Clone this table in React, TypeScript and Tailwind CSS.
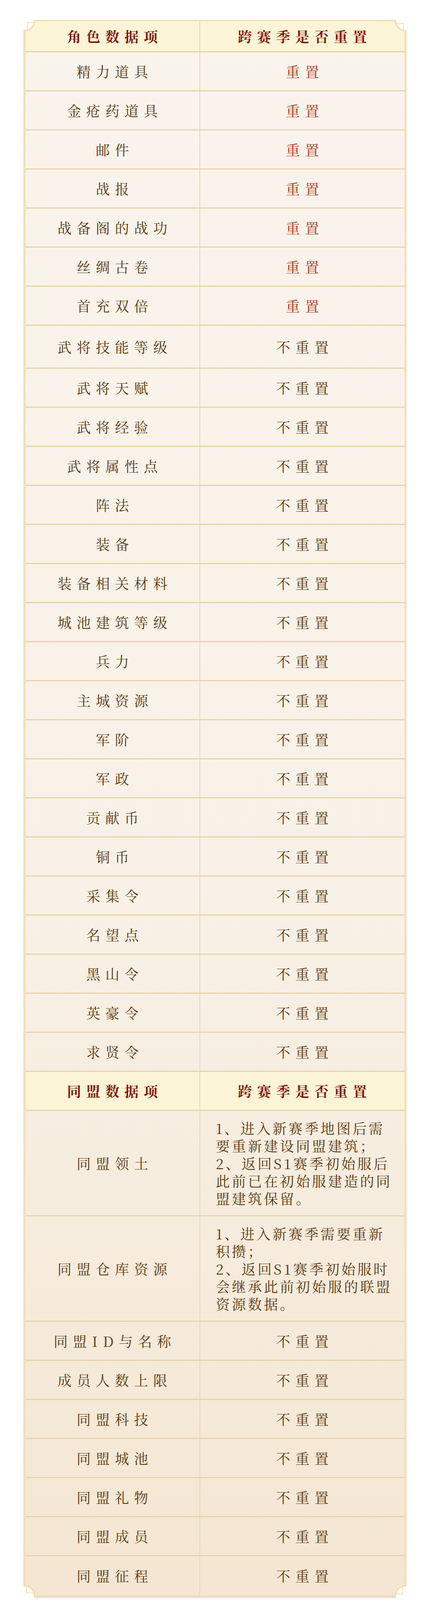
import React from "react";

type RowData = { left: string; right: string; red?: boolean; tall?: boolean };

const roleRows: RowData[] = [
  { left: "精力道具", right: "重置", red: true },
  { left: "金疮药道具", right: "重置", red: true },
  { left: "邮件", right: "重置", red: true },
  { left: "战报", right: "重置", red: true },
  { left: "战备阁的战功", right: "重置", red: true },
  { left: "丝绸古卷", right: "重置", red: true },
  { left: "首充双倍", right: "重置", red: true },
  { left: "武将技能等级", right: "不重置", tall: true },
  { left: "武将天赋", right: "不重置" },
  { left: "武将经验", right: "不重置" },
  { left: "武将属性点", right: "不重置" },
  { left: "阵法", right: "不重置" },
  { left: "装备", right: "不重置" },
  { left: "装备相关材料", right: "不重置" },
  { left: "城池建筑等级", right: "不重置" },
  { left: "兵力", right: "不重置" },
  { left: "主城资源", right: "不重置" },
  { left: "军阶", right: "不重置" },
  { left: "军政", right: "不重置" },
  { left: "贡献币", right: "不重置" },
  { left: "铜币", right: "不重置" },
  { left: "采集令", right: "不重置" },
  { left: "名望点", right: "不重置" },
  { left: "黑山令", right: "不重置" },
  { left: "英豪令", right: "不重置" },
  { left: "求贤令", right: "不重置" },
];

const allianceSimple: string[] = [
  "同盟ID与名称",
  "成员人数上限",
  "同盟科技",
  "同盟城池",
  "同盟礼物",
  "同盟成员",
  "同盟征程",
];

const cellText = "text-[36px] tracking-[13px] pl-[13px]";

function Corner({ className }: { className: string }) {
  return (
    <svg
      width="36"
      height="36"
      viewBox="0 0 36 36"
      className={`pointer-events-none absolute z-10 ${className}`}
    >
      <path d="M0 0 H32 V6 A26 26 0 0 1 6 32 H0 Z" fill="#ffffff" />
      <path
        d="M34 6 A28 28 0 0 1 6 34"
        fill="none"
        stroke="#f0dfb0"
        strokeWidth="3.5"
      />
      <path d="M15 30.5 V13 H31" fill="none" stroke="#f0dfb0" strokeWidth="2" />
    </svg>
  );
}

function HeaderRow({ left, tallClass }: { left: string; tallClass: string }) {
  return (
    <div
      className={`grid grid-cols-[447px_1fr] border-b-[3px] border-[#e7d4a8] bg-[#fcf4d6] ${tallClass}`}
    >
      <div
        className={`flex items-center justify-center border-r-2 border-[#ead8ae] font-bold text-[#7f1b0e] ${cellText}`}
      >
        {left}
      </div>
      <div
        className={`flex items-center justify-center font-bold text-[#7f1b0e] ${cellText}`}
      >
        跨赛季是否重置
      </div>
    </div>
  );
}

function Row({ row, last }: { row: RowData; last?: boolean }) {
  return (
    <div
      className={`grid grid-cols-[447px_1fr] ${row.tall ? "h-[110px]" : "h-[100px]"} ${
        last ? "" : "border-b-[3px] border-[#e7d4a8]"
      }`}
    >
      <div
        className={`flex items-center justify-center border-r-2 border-[#ead8ae] text-[#5a3810] ${cellText}`}
      >
        {row.left}
      </div>
      <div
        className={`flex items-center justify-center ${cellText} ${
          row.red ? "text-[#a93621]" : "text-[#5a3810]"
        }`}
      >
        {row.right}
      </div>
    </div>
  );
}

function LongRow({ left, lines }: { left: string; lines: string[] }) {
  return (
    <div className="grid h-[270px] grid-cols-[447px_1fr] border-b-[3px] border-[#e7d4a8]">
      <div
        className={`flex items-center justify-center border-r-2 border-[#ead8ae] text-[#5a3810] ${cellText}`}
      >
        {left}
      </div>
      <div className="flex items-center pl-[40px] text-[36px] leading-[45px] tracking-[5px] text-[#5a3810]">
        <div>
          {lines.map((l) => (
            <div key={l} className="whitespace-nowrap">
              {l}
            </div>
          ))}
        </div>
      </div>
    </div>
  );
}

export default function App() {
  return (
    <div className="min-h-[4150px] bg-white pt-[51px] font-['Noto_Serif_CJK_SC','Noto_Sans_CJK_SC','Noto_Sans_CJK_JP',serif]">
      <div className="relative mx-auto w-[978px] border-x-4 border-y-[3px] border-[#f0dfb0] bg-[linear-gradient(180deg,#f9f4ec_0%,#f8f1e7_55%,#f4e6d2_100%)] shadow-[0_3px_5px_rgba(170,110,110,0.35)]">
        <Corner className="-left-[10px] -top-[9px]" />
        <Corner className="-right-[10px] -top-[9px] rotate-90" />
        <Corner className="-right-[10px] -bottom-[9px] rotate-180" />
        <Corner className="-left-[10px] -bottom-[9px] -rotate-90" />

        <HeaderRow left="角色数据项" tallClass="h-[80px]" />
        {roleRows.map((r) => (
          <Row key={r.left} row={r} />
        ))}

        <HeaderRow left="同盟数据项" tallClass="h-[100px]" />
        <LongRow
          left="同盟领土"
          lines={[
            "1、进入新赛季地图后需",
            "要重新建设同盟建筑；",
            "2、返回S1赛季初始服后",
            "此前已在初始服建造的同",
            "盟建筑保留。",
          ]}
        />
        <LongRow
          left="同盟仓库资源"
          lines={[
            "1、进入新赛季需要重新",
            "积攒；",
            "2、返回S1赛季初始服时",
            "会继承此前初始服的联盟",
            "资源数据。",
          ]}
        />
        {allianceSimple.map((name, i) => (
          <Row
            key={name}
            row={{ left: name, right: "不重置" }}
            last={i === allianceSimple.length - 1}
          />
        ))}
      </div>
    </div>
  );
}
